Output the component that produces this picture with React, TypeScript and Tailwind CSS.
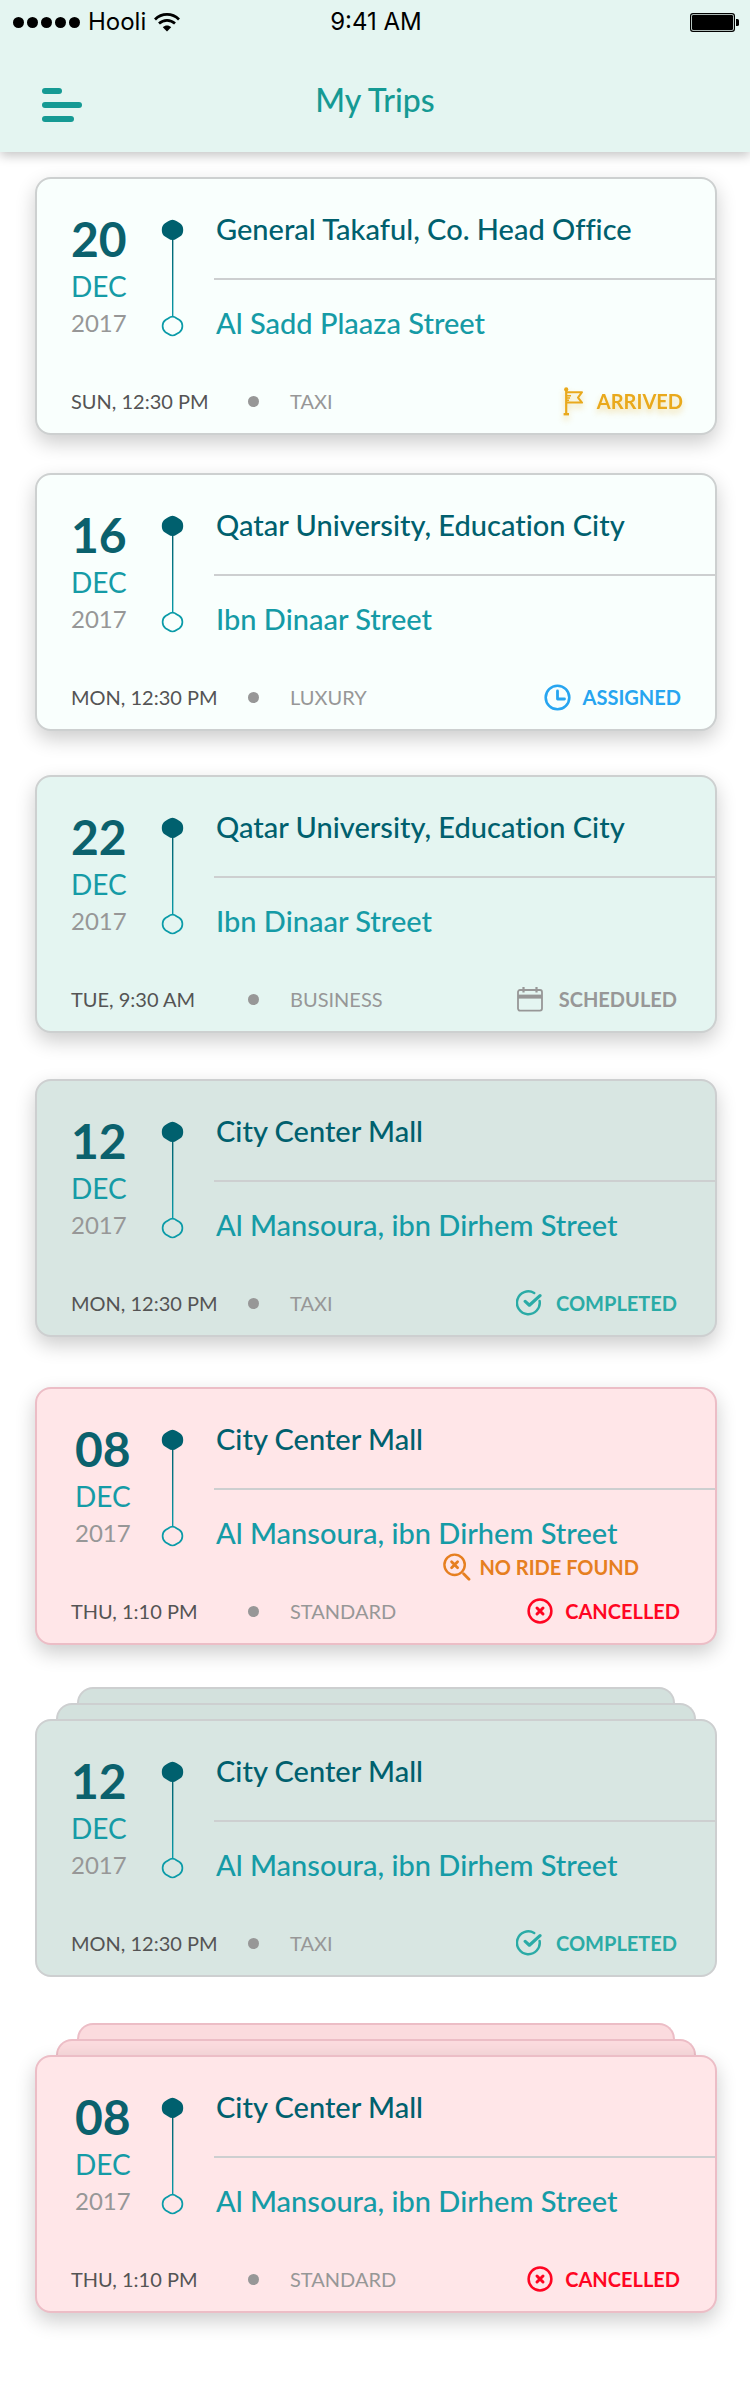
import type { ReactNode } from "react";

type Status = "arrived" | "assigned" | "scheduled" | "completed" | "cancelled";

type Trip = {
  day: string;
  from: string;
  to: string;
  time: string;
  type: string;
  status: Status;
  tone: "fresh" | "mint" | "sage" | "rose";
  gap: string;
  notice?: string;
  stacked?: boolean;
  flat?: boolean;
};

const trips: Trip[] = [
  { day: "20", from: "General Takaful, Co. Head Office", to: "Al Sadd Plaaza Street", time: "SUN, 12:30 PM", type: "TAXI", status: "arrived", tone: "fresh", gap: "mt-[25px]" },
  { day: "16", from: "Qatar University, Education City", to: "Ibn Dinaar Street", time: "MON, 12:30 PM", type: "LUXURY", status: "assigned", tone: "fresh", gap: "mt-[38px]" },
  { day: "22", from: "Qatar University, Education City", to: "Ibn Dinaar Street", time: "TUE, 9:30 AM", type: "BUSINESS", status: "scheduled", tone: "mint", gap: "mt-[44px]" },
  { day: "12", from: "City Center Mall", to: "Al Mansoura, ibn Dirhem Street", time: "MON, 12:30 PM", type: "TAXI", status: "completed", tone: "sage", gap: "mt-[46px]" },
  { day: "08", from: "City Center Mall", to: "Al Mansoura, ibn Dirhem Street", time: "THU, 1:10 PM", type: "STANDARD", status: "cancelled", tone: "rose", gap: "mt-[50px]", notice: "NO RIDE FOUND" },
  { day: "12", from: "City Center Mall", to: "Al Mansoura, ibn Dirhem Street", time: "MON, 12:30 PM", type: "TAXI", status: "completed", tone: "sage", gap: "mt-[42px]", stacked: true, flat: true },
  { day: "08", from: "City Center Mall", to: "Al Mansoura, ibn Dirhem Street", time: "THU, 1:10 PM", type: "STANDARD", status: "cancelled", tone: "rose", gap: "mt-[46px]", stacked: true },
];

const tones = {
  fresh: { card: "bg-[#f9fffd] border-[#cdd0d0]", back: "bg-[#f4fbf9] border-[#cdd0d0]", date: "pl-[34px]" },
  mint: { card: "bg-[#e4f5f1] border-[#cdd0d0]", back: "bg-[#dcefe9] border-[#cdd0d0]", date: "pl-[34px]" },
  sage: { card: "bg-[#d8e6e2] border-[#cdcfd0]", back: "bg-[#d3e1dd] border-[#cdcfd0]", date: "pl-[34px]" },
  rose: { card: "bg-[#ffe6e8] border-[#ecbdc6]", back: "bg-[#fbdbde] border-[#ecbdc6]", date: "pl-[38px]" },
};

function FlagIcon() {
  return (
    <svg width="20" height="29" viewBox="0 0 20 29" fill="none" stroke="currentColor" strokeWidth="2" aria-hidden="true">
      <circle cx="3.2" cy="2.4" r="2.1" fill="currentColor" stroke="none" />
      <path d="M3.2 3v23.5" strokeWidth="2.2" />
      <path d="M0.6 27.2h5.4" strokeWidth="2.4" />
      <path d="M4 5.2h15l-4 5.4 4 5H4" strokeLinejoin="round" />
      <path d="M4 8.8h4M4 11h3M4 13.2h2" strokeWidth="1.4" />
    </svg>
  );
}

function ClockIcon() {
  return (
    <svg width="27" height="27" viewBox="0 0 27 27" fill="none" stroke="currentColor" aria-hidden="true">
      <circle cx="13.5" cy="13.5" r="11.8" strokeWidth="2.6" />
      <path d="M13.5 7v8h7" strokeWidth="2.8" strokeLinecap="round" strokeLinejoin="round" />
    </svg>
  );
}

function CalendarIcon() {
  return (
    <svg width="26" height="26" viewBox="0 0 26 26" fill="none" stroke="currentColor" aria-hidden="true">
      <rect x="1" y="4" width="24" height="20.6" rx="2" strokeWidth="1.8" />
      <path d="M1 10.6h24" strokeWidth="4" />
      <path d="M6.5 1v5.6M19.5 1v5.6" strokeWidth="2.2" />
    </svg>
  );
}

function CheckIcon() {
  return (
    <svg width="26" height="26" viewBox="0 0 26 26" fill="none" stroke="currentColor" strokeLinecap="round" aria-hidden="true">
      <path d="M18.2 3A11.4 11.4 0 1 0 23.6 11" strokeWidth="2.5" />
      <path d="M9.2 11.4l4.2 3.8L24 5.6" strokeWidth="3.2" strokeLinejoin="round" />
    </svg>
  );
}

function CrossIcon() {
  return (
    <svg width="26" height="26" viewBox="0 0 26 26" fill="none" stroke="currentColor" aria-hidden="true">
      <circle cx="13" cy="13" r="11.4" strokeWidth="2.5" />
      <path d="M10 10l6 6M16 10l-6 6" strokeWidth="3" strokeLinecap="round" />
    </svg>
  );
}

function NoRideIcon() {
  return (
    <svg width="28" height="28" viewBox="0 0 28 28" fill="none" stroke="currentColor" aria-hidden="true">
      <circle cx="11.6" cy="11.8" r="10.2" strokeWidth="2.4" />
      <path d="M8.6 8.800l6 6M14.600 8.800L8.600 14.800" strokeWidth="2.8" strokeLinecap="round" />
      <path d="M20.6 20.8l5.4 5.4" strokeWidth="2.8" strokeLinecap="round" />
    </svg>
  );
}

const statuses: Record<Status, { label: string; icon: ReactNode; style: string }> = {
  arrived: { label: "ARRIVED", icon: <FlagIcon />, style: "gap-[14px] pr-8 text-[#e9a91c] drop-shadow-[0_4px_3px_rgba(233,169,28,0.4)]" },
  assigned: { label: "ASSIGNED", icon: <ClockIcon />, style: "gap-3 pr-[34px] text-[#27a5f0]" },
  scheduled: { label: "SCHEDULED", icon: <CalendarIcon />, style: "gap-4 pr-[38px] text-[#979797]" },
  completed: { label: "COMPLETED", icon: <CheckIcon />, style: "gap-[14px] pr-[38px] text-[#2aaba6]" },
  cancelled: { label: "CANCELLED", icon: <CrossIcon />, style: "gap-3 pr-[35px] text-[#ff0522]" },
};

function Route() {
  return (
    <svg width="24" height="118" viewBox="0 0 24 118" fill="none" aria-hidden="true">
      <defs>
        <linearGradient id="route-line" x1="0" y1="0" x2="0" y2="1">
          <stop offset="0" stopColor="#00606e" />
          <stop offset="1" stopColor="#0a9ba8" />
        </linearGradient>
      </defs>
      <rect x="11" y="18" width="1.4" height="80" fill="url(#route-line)" />
      <path d="M7.200 2.300Q11.500-.8 15.800 2.300L19 4.200Q22.200 6.400 22.200 10.900Q22.200 15.400 19 17.600L15.800 19.500Q11.500 22.600 7.200 19.500L4 17.600Q.8 15.400.8 10.900Q.8 6.400 4 4.200Z" fill="#00606e" />
      <path d="M7.500 99.200Q11.500 96.200 15.500 99.200L18.500 101Q21.400 103 21.400 107.100Q21.400 111.200 18.500 113.200L15.500 115Q11.500 118 7.500 115L4.500 113.200Q1.600 111.200 1.600 107.100Q1.600 103 4.500 101Z" stroke="#0a9ba8" strokeWidth="1.700" />
    </svg>
  );
}

function TripCard({ trip }: { trip: Trip }) {
  const tone = tones[trip.tone];
  const status = statuses[trip.status];
  return (
    <article className={`rounded-2xl border-2 ${tone.card} ${trip.flat ? "" : "shadow-[0_8px_20px_rgba(0,0,0,0.2)]"}`}>
      <div className="flex">
        <div className={`w-[124px] shrink-0 pt-[35px] ${tone.date}`}>
          <div className="text-[48px] leading-[50px] font-bold text-[#0b616d]">{trip.day}</div>
          <div className="mt-1 text-[28px] leading-9 text-[#159ba6]">DEC</div>
          <div className="mt-[3px] text-[24px] leading-8 text-[#979797]">2017</div>
        </div>
        <div className="w-[53px] shrink-0 pt-10">
          <Route />
        </div>
        <div className="min-w-0 flex-1 [font-variant-ligatures:none]">
          <div className="border-b-2 border-[#cdcfd0] pt-8 pb-[31px] pl-[2px] text-[29px] leading-9 font-medium text-[#00606e]">{trip.from}</div>
          <div className="pt-[25px] pl-[2px] text-[29px] leading-9 font-medium text-[#159ba6]">{trip.to}</div>
          <div className="flex h-[46px] items-start justify-end pt-[2px] pr-[76px]">
            {trip.notice && (
              <div className="flex items-center gap-2 text-[20px] leading-7 font-bold text-[#e67f20]">
                <NoRideIcon />
                {trip.notice}
              </div>
            )}
          </div>
        </div>
      </div>
      <div className="flex h-[46px] items-start text-[20px] leading-7">
        <div className="w-[211px] shrink-0 pl-[34px] text-[#545454]">{trip.time}</div>
        <div className="mt-[9px] size-[11px] shrink-0 rounded-full bg-[#979797]" />
        <div className="ml-[31px] text-[#979797]">{trip.type}</div>
        <div className={`ml-auto flex h-7 items-center font-bold ${status.style}`}>
          {status.icon}
          <span>{status.label}</span>
        </div>
      </div>
    </article>
  );
}

export default function App() {
  return (
    <div className="min-h-screen bg-white pb-20 font-['Lato',sans-serif]">
      <header className="bg-[#e4f5f1] shadow-[0_4px_10px_rgba(0,0,0,0.22)]">
        <div className="grid h-11 grid-cols-3 items-center pr-[11px] pl-[13px] font-['Inter',sans-serif] text-[24px] leading-7 text-black">
          <div className="flex items-center">
            <div className="flex gap-[3px]">
              {[0, 1, 2, 3, 4].map((n) => (
                <span key={n} className="size-[11px] rounded-full bg-black" />
              ))}
            </div>
            <span className="ml-2">Hooli</span>
            <svg className="ml-2" width="26" height="19" viewBox="0 0 26 19" fill="none" stroke="black" aria-hidden="true">
              <path d="M1 6.400C7.800-.2 18.200-.2 25 6.400" strokeWidth="2.800" />
              <path d="M5 10.600C9.600 6.400 16.400 6.400 21 10.600" strokeWidth="2.700" />
              <path d="M13 18.500l-4.200-4.300c2.400-2.200 6-2.200 8.400 0Z" fill="black" stroke="none" />
            </svg>
          </div>
          <div className="text-center">9:41 AM</div>
          <svg className="justify-self-end" width="49" height="19" viewBox="0 0 49 19" fill="none" aria-hidden="true">
            <rect x=".6" y=".6" width="43.800" height="17.800" rx="2.400" stroke="black" strokeWidth="1.200" />
            <rect x="2" y="2" width="41" height="15" rx="1.200" fill="black" />
            <path d="M46 6h1.400q1.600 0 1.600 1.600v3.800q0 1.600-1.600 1.600H46Z" fill="black" />
          </svg>
        </div>
        <div className="grid h-[108px] grid-cols-[82px_1fr_82px] items-start pt-9">
          <button type="button" aria-label="Menu" className="mt-2 ml-[42px] flex flex-col gap-2">
            <span className="h-[6px] w-5 rounded-full bg-[#159a94]" />
            <span className="h-[6px] w-10 rounded-full bg-[#159a94]" />
            <span className="h-[6px] w-8 rounded-full bg-[#159a94]" />
          </button>
          <h1 className="text-center text-[32px] leading-10 font-medium text-[#159a94]">My Trips</h1>
        </div>
      </header>
      <main className="mr-[33px] ml-[35px]">
        {trips.map((trip, i) => (
          <section key={i} className={trip.gap}>
            {trip.stacked && (
              <>
                <div className={`mx-[42px] h-4 rounded-t-2xl border-2 border-b-0 ${tones[trip.tone].back}`} />
                <div className={`mx-[21px] h-4 rounded-t-2xl border-2 border-b-0 ${tones[trip.tone].back}`} />
              </>
            )}
            <TripCard trip={trip} />
          </section>
        ))}
      </main>
    </div>
  );
}
